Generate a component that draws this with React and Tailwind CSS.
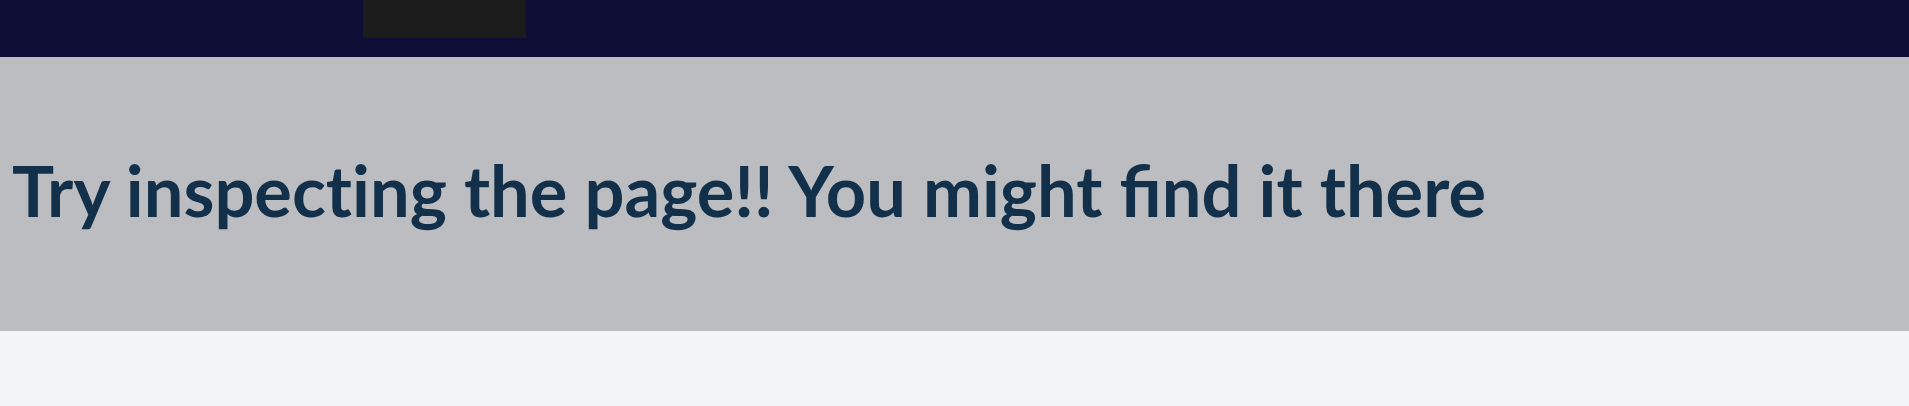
export default function App() {
  return (
    <div className="min-h-[406px] bg-[#f3f4f6] font-['Lato',sans-serif]">
      {/* Top navigation bar */}
      <div className="flex h-[57px] bg-[#0d0d35]">
        <div className="ml-[363px] h-[38px] w-[163px] bg-[#1b1b1b]" />
      </div>

      {/* Hint band */}
      <div className="flex h-[274px] items-center bg-[#bcbdc1] pl-[12px]">
        <h1 className="-mt-[8px] text-[70.4px] font-bold leading-none text-[#12304a]">
          Try <span className="[font-variant-ligatures:no-common-ligatures]">inspecting</span> the page!! You might find it there
        </h1>
      </div>
    </div>
  );
}
